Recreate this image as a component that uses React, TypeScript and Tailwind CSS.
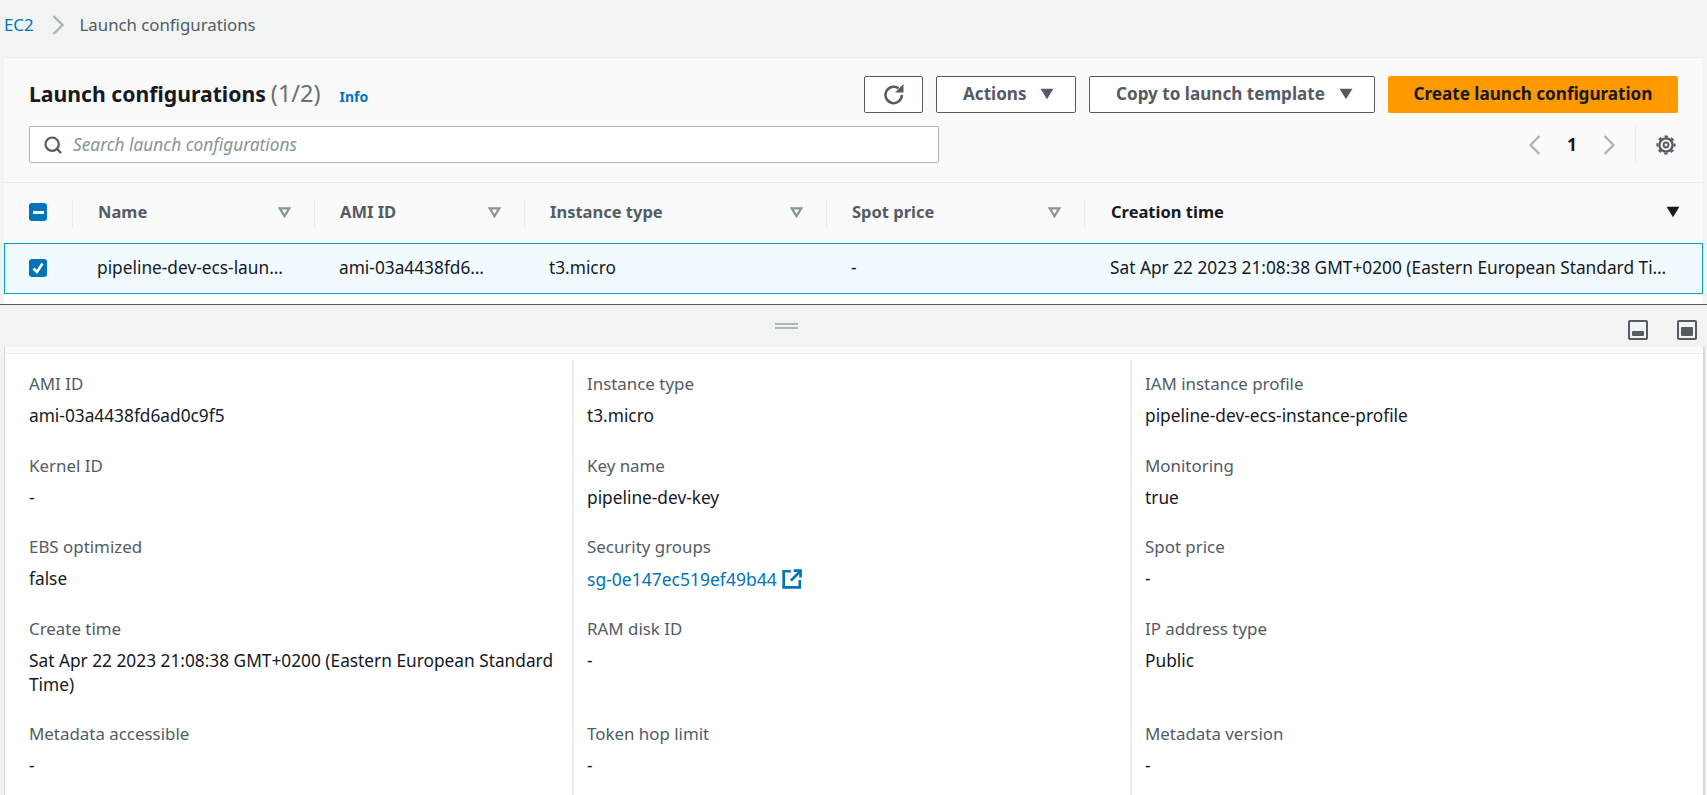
import { Search } from "lucide-react";

const columns = [
  { name: "Name", value: "pipeline-dev-ecs-laun…" },
  { name: "AMI ID", value: "ami-03a4438fd6…" },
  { name: "Instance type", value: "t3.micro" },
  { name: "Spot price", value: "-" },
];

const details = [
  ["AMI ID", "ami-03a4438fd6ad0c9f5"],
  ["Instance type", "t3.micro"],
  ["IAM instance profile", "pipeline-dev-ecs-instance-profile"],
  ["Kernel ID", "-"],
  ["Key name", "pipeline-dev-key"],
  ["Monitoring", "true"],
  ["EBS optimized", "false"],
  ["Security groups", "sg-0e147ec519ef49b44"],
  ["Spot price", "-"],
  ["Create time", "Sat Apr 22 2023 21:08:38 GMT+0200 (Eastern European Standard Time)"],
  ["RAM disk ID", "-"],
  ["IP address type", "Public"],
  ["Metadata accessible", "-"],
  ["Token hop limit", "-"],
  ["Metadata version", "-"],
];

const Caret = ({ className }: { className: string }) => (
  <svg viewBox="0 0 12 10" className={className} fill="currentColor">
    <path d="M0.5 0.5h11L6 9.5z" />
  </svg>
);

const FilterCaret = () => (
  <svg viewBox="0 0 14 12" className="w-[13px] h-[11px] text-[#879596]" fill="none" stroke="currentColor" strokeWidth="2.4">
    <path d="M1.8 1.5h10.4L7 10z" />
  </svg>
);

const Chevron = ({ left }: { left?: boolean }) => (
  <svg viewBox="0 0 12 20" className="w-[12px] h-[20px] text-[#aab7b8]" fill="none" stroke="currentColor" strokeWidth="2.3">
    <path d={left ? "M10.5 1 1.5 10l9 9" : "M1.5 1l9 9-9 9"} />
  </svg>
);

const RefreshIcon = () => (
  <svg viewBox="0 0 21 21" className="w-[21px] h-[21px]" fill="none" stroke="#545b64" strokeWidth="2.5">
    <path d="M15.5 4.3A8.2 8.2 0 1 0 18.9 11" />
    <path d="M20.5 0v8.5H12z" fill="#545b64" stroke="none" />
  </svg>
);

const GearIcon = () => (
  <svg viewBox="0 0 20 20" className="w-5 h-5" fill="none" stroke="#545b64">
    <circle cx="10" cy="10" r="6.6" strokeWidth="2.3" />
    <circle cx="10" cy="10" r="2.4" strokeWidth="2" />
    <circle cx="10" cy="10" r="8.6" strokeWidth="2" strokeDasharray="3.4 3.355" strokeDashoffset="1.7" />
  </svg>
);

const ExternalIcon = () => (
  <svg viewBox="0 0 18 18" className="w-5 h-5" fill="none" stroke="#0073bb" strokeWidth="2.4">
    <path d="M8 2H1.5v14.5H16V10" />
    <path d="M8 10.5 16 2.5M10.5 1.5h6.2v6.2" />
  </svg>
);

const PanelIcon = ({ full }: { full?: boolean }) => (
  <div className="w-5 h-5 border-[2.5px] border-[#545b64] rounded-[2px] flex items-end px-[2px] pb-[2.5px]">
    <div className={full ? "w-full h-[9px] rounded-[1px] bg-[#545b64]" : "w-full h-[5px] rounded-[1px] bg-[#545b64]"} />
  </div>
);

const Button = ({ label, width }: { label: string; width: string }) => (
  <button className={`${width} h-[37px] pl-[26px] pr-[21px] flex items-center justify-between bg-white border border-[#545b64] rounded-[2px] text-[#545b64] text-[17.1px] font-bold`}>
    {label}
    <Caret className="w-[14px] h-[12px]" />
  </button>
);

export default function App() {
  return (
    <div className="h-[795px] overflow-hidden bg-[#f2f3f3] font-['Noto_Sans',sans-serif] text-[17.3px] leading-[22px] text-[#16191f]">
      <div className="h-[57px] pb-[8px] pl-[4px] flex items-center gap-[18px] text-[16.8px]">
        <span className="text-[#0073bb]">EC2</span>
        <Chevron />
        <span className="ml-[-2px] text-[#545b64]">Launch configurations</span>
      </div>

      <div className="mx-[4px] bg-white border-t border-[#eaeded]">
        <div className="bg-[#fafafa] pt-[18px] pb-[19px] px-[25px] border-b border-[#eaeded]">
          <div className="flex items-center justify-between h-[37px]">
            <div className="flex items-baseline">
              <h1 className="text-[21.2px] font-bold leading-[26px]">Launch configurations</h1>
              <span className="ml-[5px] text-[23.5px] text-[#687078]">(1/2)</span>
              <span className="ml-[19px] text-[14px] font-bold text-[#0073bb]">Info</span>
            </div>
            <div className="flex items-center gap-[13px] pb-[1px]">
              <button className="w-[59px] h-[37px] flex items-center justify-center bg-white border border-[#545b64] rounded-[2px]">
                <RefreshIcon />
              </button>
              <Button label="Actions" width="w-[140px]" />
              <Button label="Copy to launch template" width="w-[286px]" />
              <button className="w-[290px] h-[37px] bg-[#ff9900] rounded-[2px] text-[17.1px] font-bold text-[#16191f]">
                Create launch configuration
              </button>
            </div>
          </div>
          <div className="mt-[13px] flex items-center justify-between h-[37px]">
            <div className="w-[910px] h-[37px] flex items-center gap-[10px] pl-[13px] bg-white border border-[#aab7b8] rounded-[2px]">
              <Search className="w-[20px] h-[20px] text-[#545b64]" strokeWidth={2.6} />
              <span className="italic text-[#879596]">Search launch configurations</span>
            </div>
            <div className="flex items-center h-[37px] pr-[2px]">
              <Chevron left />
              <span className="mx-[26px] w-[10px] font-bold text-[#16191f]">1</span>
              <Chevron />
              <div className="ml-[20px] mr-[20px] h-[37px] border-l border-[#eaeded]" />
              <GearIcon />
            </div>
          </div>
        </div>

        <div className="bg-[#fafafa] h-[60px] grid grid-cols-[69px_242px_210px_302px_258px_1fr] items-center text-[16.5px]">
          <div className="h-[29px] pb-[2px] border-r border-[#eaeded] pl-[25px] flex items-center">
            <div className="w-[18px] h-[18px] bg-[#0073bb] rounded-[3px] flex items-center justify-center">
              <div className="w-[11px] h-[3px] bg-white" />
            </div>
          </div>
          {columns.map((c) => (
            <div key={c.name} className="h-[29px] pl-[25px] pr-[23px] pb-[2px] border-r border-[#eaeded] flex items-center justify-between font-bold text-[#545b64]">
              {c.name}
              <FilterCaret />
            </div>
          ))}
          <div className="h-[29px] pl-[26px] pr-[23px] pb-[2px] flex items-center justify-between font-bold text-[#16191f]">
            Creation time
            <Caret className="w-[14px] h-[12px]" />
          </div>
        </div>

        <div className="h-[51px] pb-[2px] bg-[#f1faff] border border-[#00a1c9] grid grid-cols-[68px_242px_210px_302px_258px_1fr] items-center">
          <div className="pl-[24px]">
            <div className="w-[18px] h-[18px] bg-[#0073bb] rounded-[3px] flex items-center justify-center">
              <svg viewBox="0 0 14 14" className="w-[14px] h-[14px]" fill="none" stroke="white" strokeWidth="2.6">
                <path d="M2.5 7.5 6 11l5.5-8.5" />
              </svg>
            </div>
          </div>
          {columns.map((c) => (
            <div key={c.name} className="pl-[24px] truncate">{c.value}</div>
          ))}
          <div className="pl-[25px] truncate">Sat Apr 22 2023 21:08:38 GMT+0200 (Eastern European Standard Ti…</div>
        </div>
        <div className="h-[10px]" />
      </div>

      <div className="border-t border-[#545b64] h-[43px] relative flex items-center pl-[775px]">
        <div className="w-[23px] h-[6px] border-y-2 border-[#aab7b8]" />
        <div className="absolute right-[10px] top-[15px] flex gap-[29px]">
          <PanelIcon />
          <PanelIcon full />
        </div>
      </div>

      <div className="ml-[4px] mr-[2px] bg-white border-l border-r-2 border-[#d5dbdb]">
        <div className="h-[6px] bg-[#fafafa]" />
        <div className="grid grid-cols-[567px_558px_1fr] border-t border-[#eaeded] pt-[6px]">
          {details.map(([label, value], i) => (
            <div
              key={label + i}
              className={`${i % 3 === 0 ? "pl-[24px]" : "pl-[13px] border-l-2 border-[#eaeded]"} pr-[18px] pt-[13px] ${i >= 12 ? "pb-[40px]" : "pb-[13.5px]"}`}
            >
              <div className="text-[#545b64] text-[16.9px]">{label}</div>
              {label === "Security groups" ? (
                <div className="mt-[9px] flex items-center gap-[5px] leading-[24px] text-[17.5px] text-[#0073bb]">
                  {value}
                  <ExternalIcon />
                </div>
              ) : (
                <div className="mt-[9px] leading-[24px]">{value}</div>
              )}
            </div>
          ))}
        </div>
      </div>
    </div>
  );
}
